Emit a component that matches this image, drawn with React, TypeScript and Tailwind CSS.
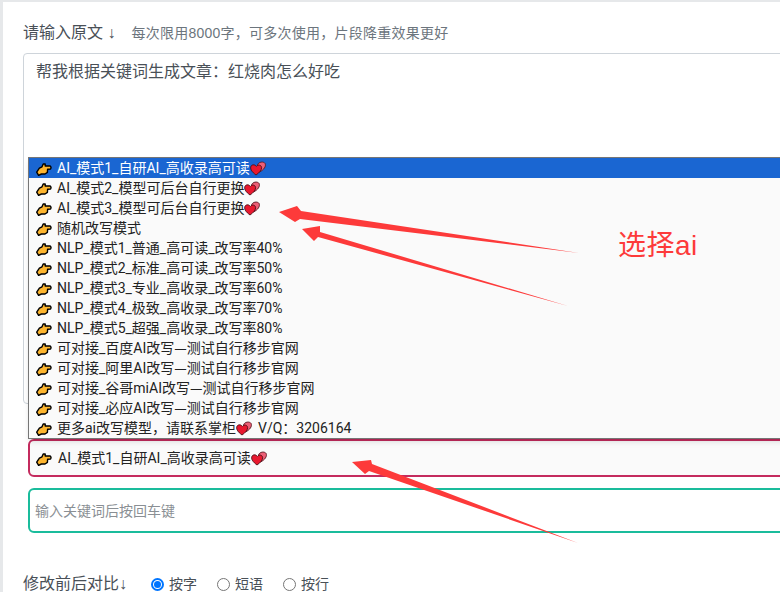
const HandIcon = () => (
  <svg width="16" height="13" viewBox="0 0 16 13" className="mt-[2px] shrink-0">
    <path
      d="M0.7 9.2 L3.4 5.2 L6 3.8 L7.2 1 L9.2 1 L9.2 3 L14.2 3 Q15.6 4.2 14.6 6 L11.6 6.2 L11.4 9.4 L9 11 L5.4 11 L2.6 12.4 Z"
      fill="#fdb52e"
      stroke="#000"
      strokeWidth="1.4"
      strokeLinejoin="round"
    />
  </svg>
);

const HeartIcon = () => (
  <svg width="16" height="15" viewBox="0 0 16 15" className="inline-block shrink-0">
    <path d="M7.5 4 C8.5 0.8 13.5 0 15.2 2.6 C16.2 5.4 14 8.8 9.5 11 Z" fill="#ec5f76" stroke="#5a1a24" strokeWidth="0.9" />
    <path d="M6 14 C2 11 0.3 8.5 0.7 6.2 C1.2 3.4 4.6 3 6.4 5.4 C8 3.2 11.4 3.8 11.6 6.6 C11.7 9 9.6 11.6 6 14 Z" fill="#e8182f" stroke="#4a1016" strokeWidth="0.9" />
  </svg>
);

const options = [
  "AI_模式1_自研AI_高收录高可读",
  "AI_模式2_模型可后台自行更换",
  "AI_模式3_模型可后台自行更换",
  "随机改写模式",
  "NLP_模式1_普通_高可读_改写率40%",
  "NLP_模式2_标准_高可读_改写率50%",
  "NLP_模式3_专业_高收录_改写率60%",
  "NLP_模式4_极致_高收录_改写率70%",
  "NLP_模式5_超强_高收录_改写率80%",
  "可对接_百度AI改写—测试自行移步官网",
  "可对接_阿里AI改写—测试自行移步官网",
  "可对接_谷哥miAI改写—测试自行移步官网",
  "可对接_必应AI改写—测试自行移步官网",
];

const withHeart = [0, 1, 2];

// the dash needs the full CJK width, Roboto's is too short
const OptionText = ({ text }: { text: string }) => {
  const [before, after] = text.split("—");
  if (after === undefined) return <span className="ml-[5px]">{text}</span>;
  return (
    <span className="ml-[5px]">
      {before}
      <span className="font-['Noto_Sans_CJK_SC',sans-serif] leading-none">—</span>
      {after}
    </span>
  );
};

const App = () => {
  return (
    <div className="relative h-[592px] w-[780px] overflow-hidden border-l-[3px] border-t-[2px] border-[#e6e8ea] bg-white font-['Liberation_Sans','Noto_Sans_CJK_SC',sans-serif] text-[#495057]">
      <div className="w-[900px] pl-[20px] pt-[19px]">
        <div className="flex h-[24px] items-center">
          <span className="text-base">请输入原文 ↓</span>
          <span className="ml-[16px] text-sm tracking-[0.25px] text-[#6c757d]">每次限用8000字，可多次使用，片段降重效果更好</span>
        </div>

        <div className="mt-[8px] h-[351px] rounded border border-[#ced4da] px-[12px] py-[6px] text-base leading-6">
          帮我根据关键词生成文章：红烧肉怎么好吃
        </div>

        <div className="relative ml-[5px] mt-[35px] font-['Roboto','Noto_Sans_CJK_SC',sans-serif]">
          <ul className="absolute bottom-full left-0 w-full border border-[#767676] bg-[#fafafa] text-sm text-[#222] shadow-md">
            {options.map((text, i) => (
              <li
                key={text}
                className={
                  i === 0
                    ? "flex h-5 items-center bg-[#1a66d2] pl-[7px] text-white"
                    : "flex h-5 items-center pl-[7px]"
                }
              >
                <HandIcon />
                <OptionText text={text} />
                {withHeart.includes(i) && <HeartIcon />}
              </li>
            ))}
            <li className="flex h-5 items-center pl-[7px]">
              <HandIcon />
              <span className="ml-[5px]">更多ai改写模型，请联系掌柜</span>
              <HeartIcon />
              <span className="ml-[6px]">V/Q：3206164</span>
            </li>
          </ul>

          <div className="flex h-[38px] items-center rounded-md border-2 border-[#c42b5e] bg-[#fafafa] pl-[6px] text-sm text-[#222]">
            <HandIcon />
            <span className="ml-[6px]">AI_模式1_自研AI_高收录高可读</span>
            <HeartIcon />
          </div>
        </div>

        <div className="ml-[5px] mt-[11px] flex h-[45px] items-center rounded-md border-2 border-[#1abc9c] pl-[5px] text-sm text-[#8a8f94]">
          输入关键词后按回车键
        </div>

        <div className="mt-[39px] flex h-[24px] items-center">
          <span className="w-[128px] text-base">修改前后对比↓</span>
          <label className="flex w-[66px] items-center gap-[5px] text-sm">
            <span className="flex h-[13px] w-[13px] items-center justify-center rounded-full border-2 border-[#0075ff]">
              <span className="h-[7px] w-[7px] rounded-full bg-[#0075ff]" />
            </span>
            按字
          </label>
          <label className="flex w-[66px] items-center gap-[5px] text-sm">
            <span className="h-[13px] w-[13px] rounded-full border border-[#767676]" />
            短语
          </label>
          <label className="flex w-[66px] items-center gap-[5px] text-sm">
            <span className="h-[13px] w-[13px] rounded-full border border-[#767676]" />
            按行
          </label>
        </div>
      </div>

      {/* annotation layer drawn on top of the screenshot */}
      <svg width="780" height="592" viewBox="0 0 780 592" className="pointer-events-none absolute -left-[3px] -top-[2px]">
        <polygon points="279,212 297,206 301,211 579,253 300,219 295,222" fill="#fd3a3a" />
        <polygon points="302,229 320,226 320,232 568,306 318,237 314,241" fill="#fd3a3a" />
        <polygon points="352,462 371,460 372,464 578,543 369,471 365,474" fill="#fd3a3a" />
      </svg>
      <span className="absolute left-[615px] top-[226px] text-[28px] leading-9 tracking-[0.5px] text-[#fd3a3a]">选择ai</span>
    </div>
  );
};

export default App;
